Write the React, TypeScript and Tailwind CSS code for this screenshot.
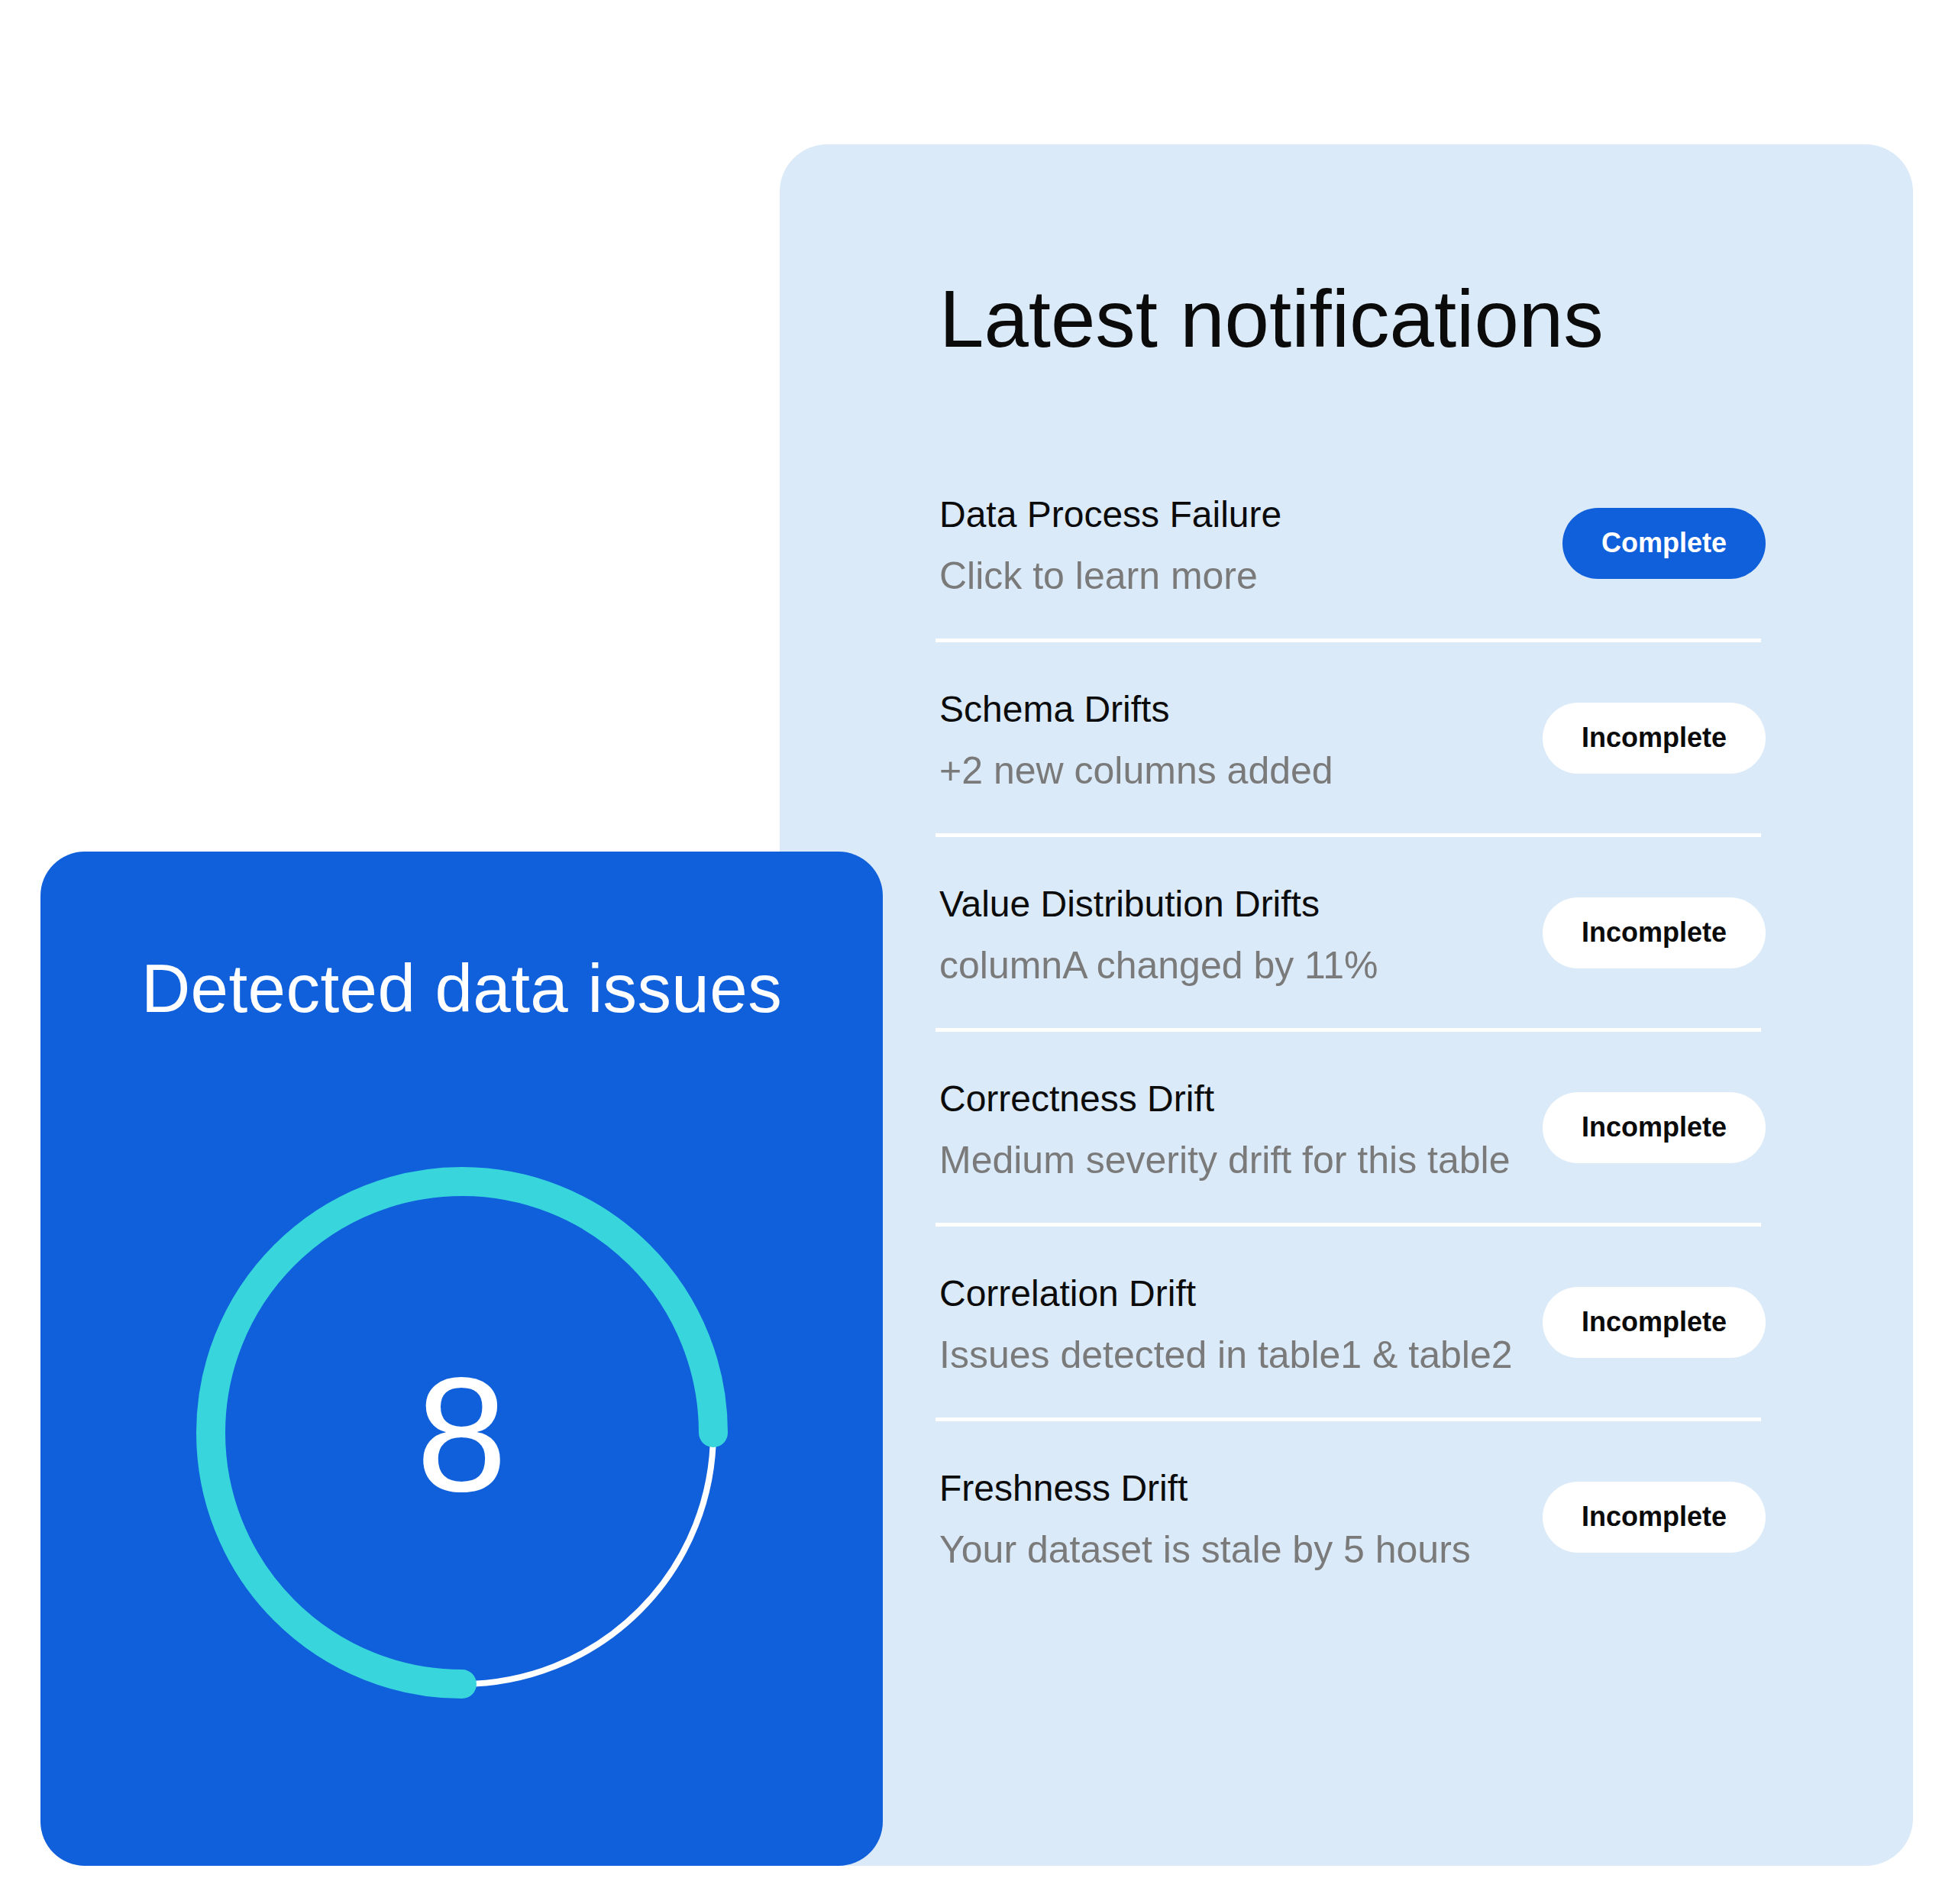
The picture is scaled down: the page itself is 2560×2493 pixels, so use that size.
const notifications = [
  { title: 'Data Process Failure', detail: 'Click to learn more', done: true },
  { title: 'Schema Drifts', detail: '+2 new columns added', done: false },
  { title: 'Value Distribution Drifts', detail: 'columnA changed by 11%', done: false },
  { title: 'Correctness Drift', detail: 'Medium severity drift for this table', done: false },
  { title: 'Correlation Drift', detail: 'Issues detected in table1 & table2', done: false },
  { title: 'Freshness Drift', detail: 'Your dataset is stale by 5 hours', done: false },
];

function StatusPill({ done }: { done: boolean }) {
  return (
    <button
      className={
        done
          ? 'h-[93px] px-[51px] rounded-full bg-[#1060dc] text-white text-[36px] font-bold'
          : 'h-[93px] px-[51px] rounded-full bg-white text-[#0b0b0b] text-[36px] font-bold'
      }
    >
      {done ? 'Complete' : 'Incomplete'}
    </button>
  );
}

function IssuesCard() {
  return (
    <div className="absolute left-[53px] top-[1115px] w-[1103px] h-[1328px] rounded-[58px] bg-[#1060dc] flex flex-col items-center pt-[135px]">
      <h2 className="text-white text-[89px] leading-none tracking-[0.4px]">Detected data issues</h2>
      <div className="mt-[187px] grid place-items-center">
        <svg width="700" height="700" viewBox="0 0 700 700" className="[grid-area:1/1]">
          <path d="M 679 350 A 329 329 0 0 1 350 679" fill="none" stroke="#ffffff" strokeWidth="8" />
          <path
            d="M 350 679 A 329 329 0 1 1 679 350"
            fill="none"
            stroke="#38d6dc"
            strokeWidth="38"
            strokeLinecap="round"
          />
        </svg>
        <span className="[grid-area:1/1] pt-[4px] text-white text-[214px] leading-none">8</span>
      </div>
    </div>
  );
}

export default function App() {
  return (
    <div
      className="relative w-[2560px] h-[2493px] bg-white overflow-hidden"
      style={{ fontFamily: '"Liberation Sans", Arial, sans-serif' }}
    >
      <div className="ml-[1021px] mt-[189px] w-[1484px] h-[2254px] rounded-[62px] bg-[#dbeaf8] pl-[204px] pr-[193px] pt-[176px]">
        <h1 className="pl-[5px] text-[105px] leading-none text-[#0b0b0b]">Latest notifications</h1>
        <div className="mt-[116px] flex flex-col">
          {notifications.map((n, i) => (
            <div key={n.title}>
              {i > 0 && <div className="h-[5px] mr-[6px] bg-white" />}
              <div className="h-[250px] pl-[5px] flex items-center justify-between">
                <div className="flex flex-col pt-[6px]">
                  <span className="text-[48px] leading-[81px] text-[#0b0b0b]">{n.title}</span>
                  <span className="text-[50px] leading-[81px] text-[#7a7a7a]">{n.detail}</span>
                </div>
                <StatusPill done={n.done} />
              </div>
            </div>
          ))}
        </div>
      </div>
      <IssuesCard />
    </div>
  );
}
